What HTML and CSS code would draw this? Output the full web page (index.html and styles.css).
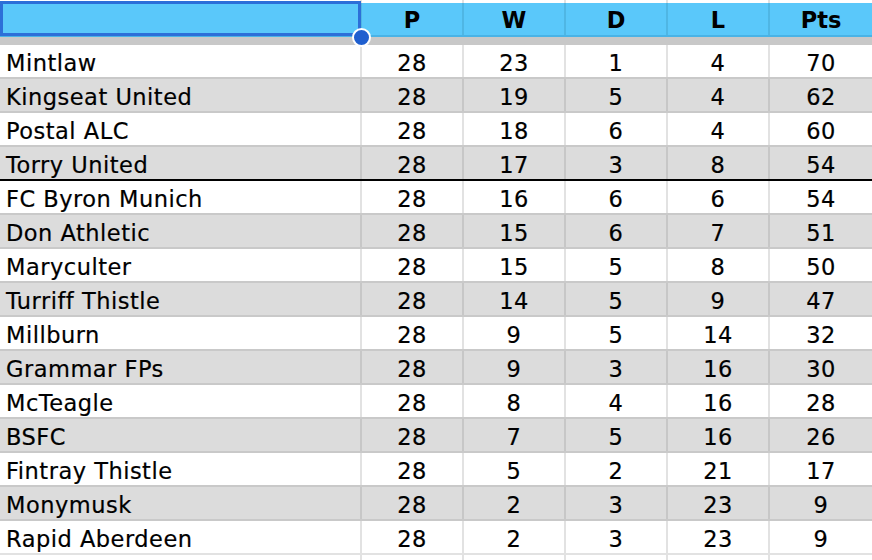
FILE: index.html
```html
<!DOCTYPE html>
<html>
<head>
<meta charset="utf-8">
<link rel="stylesheet" href="styles.css">
</head>
<body>
<div class="sheet">
  <div class="row strip">
    <div class="cell name"></div><div class="cell"></div><div class="cell"></div><div class="cell"></div><div class="cell"></div><div class="cell"></div>
  </div>
  <div class="row head">
    <div class="cell name"></div><div class="cell">P</div><div class="cell">W</div><div class="cell">D</div><div class="cell">L</div><div class="cell">Pts</div>
  </div>
  <div class="sep"></div>
  <div class="row"><div class="cell name">Mintlaw</div><div class="cell">28</div><div class="cell">23</div><div class="cell">1</div><div class="cell">4</div><div class="cell">70</div></div>
  <div class="row alt"><div class="cell name">Kingseat United</div><div class="cell">28</div><div class="cell">19</div><div class="cell">5</div><div class="cell">4</div><div class="cell">62</div></div>
  <div class="row"><div class="cell name">Postal ALC</div><div class="cell">28</div><div class="cell">18</div><div class="cell">6</div><div class="cell">4</div><div class="cell">60</div></div>
  <div class="row alt cut"><div class="cell name">Torry United</div><div class="cell">28</div><div class="cell">17</div><div class="cell">3</div><div class="cell">8</div><div class="cell">54</div></div>
  <div class="row"><div class="cell name">FC Byron Munich</div><div class="cell">28</div><div class="cell">16</div><div class="cell">6</div><div class="cell">6</div><div class="cell">54</div></div>
  <div class="row alt"><div class="cell name">Don Athletic</div><div class="cell">28</div><div class="cell">15</div><div class="cell">6</div><div class="cell">7</div><div class="cell">51</div></div>
  <div class="row"><div class="cell name">Maryculter</div><div class="cell">28</div><div class="cell">15</div><div class="cell">5</div><div class="cell">8</div><div class="cell">50</div></div>
  <div class="row alt"><div class="cell name">Turriff Thistle</div><div class="cell">28</div><div class="cell">14</div><div class="cell">5</div><div class="cell">9</div><div class="cell">47</div></div>
  <div class="row"><div class="cell name">Millburn</div><div class="cell">28</div><div class="cell">9</div><div class="cell">5</div><div class="cell">14</div><div class="cell">32</div></div>
  <div class="row alt"><div class="cell name">Grammar FPs</div><div class="cell">28</div><div class="cell">9</div><div class="cell">3</div><div class="cell">16</div><div class="cell">30</div></div>
  <div class="row"><div class="cell name">McTeagle</div><div class="cell">28</div><div class="cell">8</div><div class="cell">4</div><div class="cell">16</div><div class="cell">28</div></div>
  <div class="row alt"><div class="cell name">BSFC</div><div class="cell">28</div><div class="cell">7</div><div class="cell">5</div><div class="cell">16</div><div class="cell">26</div></div>
  <div class="row"><div class="cell name">Fintray Thistle</div><div class="cell">28</div><div class="cell">5</div><div class="cell">2</div><div class="cell">21</div><div class="cell">17</div></div>
  <div class="row alt"><div class="cell name">Monymusk</div><div class="cell">28</div><div class="cell">2</div><div class="cell">3</div><div class="cell">23</div><div class="cell">9</div></div>
  <div class="row last"><div class="cell name">Rapid Aberdeen</div><div class="cell">28</div><div class="cell">2</div><div class="cell">3</div><div class="cell">23</div><div class="cell">9</div></div>
  <div class="row strip bottom">
    <div class="cell name"></div><div class="cell"></div><div class="cell"></div><div class="cell"></div><div class="cell"></div><div class="cell"></div>
  </div>
  <div class="selection"></div>
  <div class="handle"></div>
</div>
</body>
</html>
```

FILE: styles.css
```css
* { box-sizing: border-box; }
html, body {
  margin: 0;
  padding: 0;
  background: #fff;
  overflow: hidden;
}
.sheet {
  position: relative;
  width: 872px;
  height: 560px;
  font-family: "DejaVu Sans", "Liberation Sans", sans-serif;
  font-size: 22.5px;
  letter-spacing: 0.5px;
  color: #000;
}
.row {
  display: flex;
  height: 34px;
  background: #fff;
  border-bottom: 2px solid #c9c9c9;
}
.cell {
  width: 102px;
  display: flex;
  align-items: center;
  justify-content: center;
  padding-top: 3px;
  border-right: 2px solid #e2e2e2;
  white-space: nowrap;
  -webkit-text-stroke: 0.2px #000;
}
.cell:last-child {
  border-right: none;
  flex: 1;
}
.cell.name {
  width: 362px;
  justify-content: flex-start;
  padding-left: 6px;
}
.row.alt {
  background: #dcdcdc;
}
.row.alt .cell {
  border-right-color: #c7c7c7;
}
.row.cut {
  border-bottom-color: #000;
}
.row.last {
  border-bottom-color: #e2e2e2;
}
.row.strip {
  height: 3px;
  border-bottom: none;
}
.row.strip .cell,
.row.head .cell {
  padding-top: 0;
}
.row.strip.bottom {
  height: 10px;
}
.row.head {
  height: 34px;
  background: #5ac8fa;
  border-bottom: 2px solid #49b3e6;
  font-weight: bold;
  letter-spacing: 0;
}
.row.head .cell {
  padding-top: 2px;
  border-right-color: #4fb6e4;
  -webkit-text-stroke: 0;
}
.sep {
  height: 8px;
  background: #c8c8c8;
}
.selection {
  position: absolute;
  left: 0;
  top: 1px;
  width: 361px;
  height: 35px;
  border: 3px solid #2c6fd8;
}
.handle {
  position: absolute;
  left: 352px;
  top: 28px;
  width: 19px;
  height: 19px;
  border-radius: 50%;
  background: #1f5fcf;
  border: 2px solid #fff;
}
```
